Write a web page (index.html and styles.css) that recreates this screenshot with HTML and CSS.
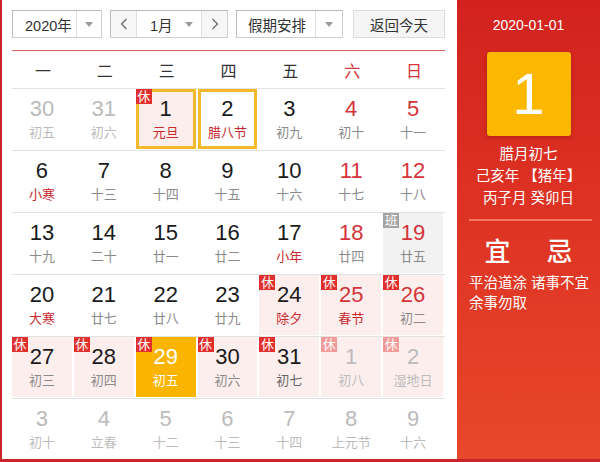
FILE: index.html
```html
<!DOCTYPE html>
<html lang="zh">
<head>
<meta charset="utf-8">
<link rel="stylesheet" href="styles.css">
</head>
<body>
<div class="wrap">
  <div class="main">
    <div class="controls">
      <div class="pick year"><span class="val">2020年</span><span class="arr"><i class="tri"></i></span></div>
      <div class="pick month">
        <span class="nav"><svg width="8" height="12" viewBox="0 0 8 12"><polyline points="6.5,1 1.5,6 6.5,11" fill="none" stroke="#666" stroke-width="1.2"/></svg></span>
        <span class="val mval">1月</span><span class="arr"><i class="tri"></i></span>
        <span class="nav navr"><svg width="8" height="12" viewBox="0 0 8 12"><polyline points="1.5,1 6.5,6 1.5,11" fill="none" stroke="#666" stroke-width="1.2"/></svg></span>
      </div>
      <div class="pick holi"><span class="val">假期安排</span><span class="arr"><i class="tri"></i></span></div>
      <div class="btn">返回今天</div>
    </div>
    <div class="rule"></div>
    <div class="week head">
      <span>一</span><span>二</span><span>三</span><span>四</span><span>五</span><span class="we">六</span><span class="we">日</span>
    </div>
    <div class="week">
      <div class="d o"><b>30</b><small>初五</small></div>
      <div class="d o"><b>31</b><small>初六</small></div>
      <div class="d h chosen"><i class="b">休</i><b>1</b><small class="f">元旦</small></div>
      <div class="d chosen"><b>2</b><small class="f">腊八节</small></div>
      <div class="d"><b>3</b><small>初九</small></div>
      <div class="d w"><b>4</b><small>初十</small></div>
      <div class="d w"><b>5</b><small>十一</small></div>
    </div>
    <div class="week">
      <div class="d"><b>6</b><small class="f">小寒</small></div>
      <div class="d"><b>7</b><small>十三</small></div>
      <div class="d"><b>8</b><small>十四</small></div>
      <div class="d"><b>9</b><small>十五</small></div>
      <div class="d"><b>10</b><small>十六</small></div>
      <div class="d w"><b>11</b><small>十七</small></div>
      <div class="d w"><b>12</b><small>十八</small></div>
    </div>
    <div class="week">
      <div class="d"><b>13</b><small>十九</small></div>
      <div class="d"><b>14</b><small>二十</small></div>
      <div class="d"><b>15</b><small>廿一</small></div>
      <div class="d"><b>16</b><small>廿二</small></div>
      <div class="d"><b>17</b><small class="f">小年</small></div>
      <div class="d w"><b>18</b><small>廿四</small></div>
      <div class="d w work"><i class="b ban">班</i><b>19</b><small>廿五</small></div>
    </div>
    <div class="week">
      <div class="d"><b>20</b><small class="f">大寒</small></div>
      <div class="d"><b>21</b><small>廿七</small></div>
      <div class="d"><b>22</b><small>廿八</small></div>
      <div class="d"><b>23</b><small>廿九</small></div>
      <div class="d h"><i class="b">休</i><b>24</b><small class="f">除夕</small></div>
      <div class="d h w"><i class="b">休</i><b>25</b><small class="f">春节</small></div>
      <div class="d h w"><i class="b">休</i><b>26</b><small>初二</small></div>
    </div>
    <div class="week">
      <div class="d h"><i class="b">休</i><b>27</b><small>初三</small></div>
      <div class="d h"><i class="b">休</i><b>28</b><small>初四</small></div>
      <div class="d today"><i class="b">休</i><b>29</b><small>初五</small></div>
      <div class="d h"><i class="b">休</i><b>30</b><small>初六</small></div>
      <div class="d h"><i class="b">休</i><b>31</b><small class="dk">初七</small></div>
      <div class="d h o"><i class="b lt">休</i><b>1</b><small>初八</small></div>
      <div class="d h o"><i class="b lt">休</i><b>2</b><small>湿地日</small></div>
    </div>
    <div class="week last">
      <div class="d o"><b>3</b><small>初十</small></div>
      <div class="d o"><b>4</b><small>立春</small></div>
      <div class="d o"><b>5</b><small>十二</small></div>
      <div class="d o"><b>6</b><small>十三</small></div>
      <div class="d o"><b>7</b><small>十四</small></div>
      <div class="d o"><b>8</b><small>上元节</small></div>
      <div class="d o"><b>9</b><small>十六</small></div>
    </div>
  </div>
  <div class="side">
    <div class="date">2020-01-01</div>
    <div class="big">1</div>
    <div class="lunar">
      <div>腊月初七</div>
      <div>己亥年 【猪年】</div>
      <div>丙子月 癸卯日</div>
    </div>
    <div class="sline"></div>
    <div class="yj"><span>宜</span><span>忌</span></div>
    <div class="yjtext">
      <div>平治道涂 诸事不宜</div>
      <div>余事勿取</div>
    </div>
  </div>
</div>
</body>
</html>
```

FILE: styles.css
```css
* { box-sizing: border-box; }
html, body { margin: 0; padding: 0; }
body {
  font-family: "Liberation Sans", "Noto Sans CJK SC", sans-serif;
  background: #fff;
  color: #222;
}
.wrap {
  width: 600px;
  height: 462px;
  display: flex;
  border-left: 2px solid #c8262a;
  border-bottom: 3px solid #c8262a;
  overflow: hidden;
}
.main {
  width: 455px;
  flex: none;
  padding: 10px 12px 0 10px;
  overflow: hidden;
}
.controls {
  display: flex;
  height: 28px;
  gap: 8px;
}
.pick, .btn {
  height: 28px;
  border: 1px solid #cfcfcf;
  border-top-color: #b9b9b9;
  border-left-color: #bdbdbd;
  background: #fff;
  display: flex;
  align-items: center;
  font-size: 14.5px;
  color: #333;
}
.year { width: 90px; }
.year .val { width: 63px; padding-left: 12px; }
.arr {
  flex: 1;
  align-self: stretch;
  border-left: 1px solid #ddd;
  display: flex;
  align-items: center;
  justify-content: center;
}
.tri {
  width: 0; height: 0;
  border-left: 4px solid transparent;
  border-right: 4px solid transparent;
  border-top: 5px solid #9a9a9a;
}
.month { width: 118px; }
.nav {
  width: 26px;
  align-self: stretch;
  background: #f7f7f7;
  display: flex;
  align-items: center;
  justify-content: center;
  border-right: 1px solid #ddd;
}
.navr { border-right: none; border-left: 1px solid #ddd; }
.mval { width: 40px; padding-left: 13px; }
.month .arr { border-left: none; }
.holi { width: 107px; }
.holi .val { width: 78px; padding-left: 11px; }
.btn {
  width: 92px;
  margin-left: 2px;
  justify-content: center;
  background: #f5f5f5;
  border-color: #dcdcdc;
}
.rule {
  height: 1px;
  background: #d9625c;
  margin-top: 12px;
}
.week {
  display: grid;
  grid-template-columns: repeat(7, 1fr);
  height: 62px;
  border-bottom: 1px solid #e2e2e2;
}
.week.last { border-bottom: none; }
.head {
  height: 38px;
  align-items: center;
  font-size: 16px;
  color: #333;
  text-align: center;
}
.head .we { color: #d5343a; }
.d {
  position: relative;
  margin: 0 2px 1px 0;
  text-align: center;
  padding-top: 7px;
}
.d b {
  display: block;
  font-weight: normal;
  font-size: 22px;
  line-height: 26px;
  color: #1a1a1a;
}
.d small {
  display: block;
  font-size: 13px;
  line-height: 18px;
  margin-top: 2px;
  color: #8a8a8a;
}
.d small.f { color: #c9282d; }
.d small.dk { color: #666; }
.d.w b { color: #d5343a; }
.d.o b, .d.o small { color: #bbbbbb; }
.d.h { background: #fdeeee; }
.d.work { background: #f2f2f2; }
.d.chosen { box-shadow: inset 0 0 0 3px #f5b92c; }
.d.today { background: #fbb400; }
.d.today b, .d.today small { color: #fff; }
.b {
  position: absolute;
  top: 0;
  left: 0;
  width: 16px;
  height: 15px;
  background: #e0302e;
  color: #fff;
  font-style: normal;
  font-size: 13px;
  line-height: 15px;
  text-align: center;
}
.b.lt { background: #f19a98; }
.b.ban { background: #a3a3a3; }
.side {
  flex: 1;
  background: linear-gradient(to bottom, #d3221e 0%, #de3424 50%, #e8482b 100%);
  color: #fff;
  text-align: center;
  padding-top: 15px;
}
.date {
  font-size: 14px;
  line-height: 20px;
}
.big {
  width: 84px;
  height: 84px;
  margin: 17px auto 0;
  background: #fcb800;
  border-radius: 3px;
  box-shadow: 0 2px 4px rgba(120, 20, 0, 0.35);
  font-size: 58px;
  line-height: 84px;
  color: #fff;
}
.lunar {
  margin-top: 7px;
  font-size: 14.5px;
  line-height: 22px;
}
.sline {
  height: 2px;
  background: #f27660;
  margin: 10px 8px 0 12px;
}
.yj {
  display: flex;
  justify-content: center;
  gap: 36px;
  margin-top: 15px;
  font-size: 26px;
  line-height: 32px;
  font-weight: 500;
}
.yjtext {
  margin-top: 5px;
  text-align: left;
  padding-left: 12px;
  font-size: 14.5px;
  line-height: 20px;
}
```
